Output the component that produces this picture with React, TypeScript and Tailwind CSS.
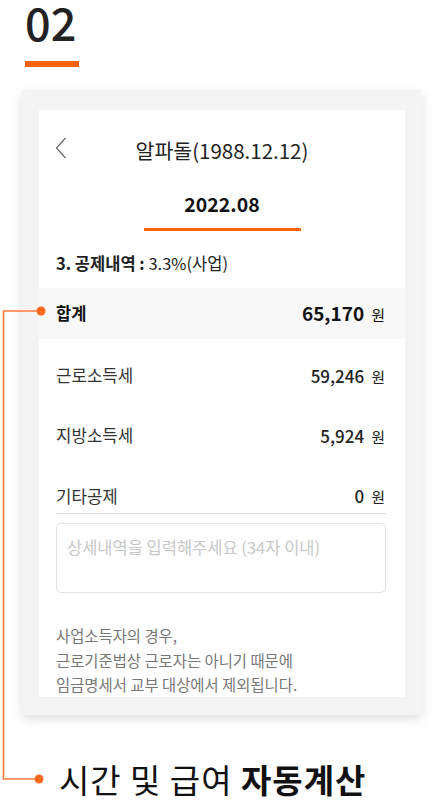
import React from 'react';

const FONT = "font-['Noto_Sans_CJK_KR','Noto_Sans',sans-serif]";

const Row: React.FC<{ label: string; value: string; className?: string }> = ({ label, value, className }) => (
  <div className={`flex items-center justify-between pl-[17px] pr-[20px] ${className ?? ''}`}>
    <span className="text-[16.8px] text-[#333]">{label}</span>
    <span className="flex items-baseline gap-[7px] text-[#222]">
      <span className="text-[17px] font-medium">{value}</span>
      <span className="text-[15px]">원</span>
    </span>
  </div>
);

const Connector: React.FC = () => (
  <svg className="absolute left-0 top-0 pointer-events-none" width="60" height="804" viewBox="0 0 60 804">
    <path d="M40 311 H3.5 V779 H38" fill="none" stroke="#ff7a3a" strokeWidth="1.6" />
    <circle cx="41" cy="311" r="4.5" fill="#ff6a1f" />
    <circle cx="39" cy="779" r="4.5" fill="#ff6a1f" />
  </svg>
);

export default function App() {
  return (
    <div className={`relative w-[442px] h-[804px] overflow-hidden bg-white ${FONT}`}>
      <div className="pl-[25px]">
        <div className="text-[45px] font-medium leading-[44px] text-[#222]">02</div>
        <div className="mt-[17px] w-[54px] h-[6px] bg-[#ff6200]" />
      </div>

      <div className="mt-[23px] ml-[22px] w-[400px] bg-[#f4f4f4] pt-[20px] pb-[18px] px-[17px] shadow-[0_4px_10px_rgba(0,0,0,0.12)]">
        <div className="bg-white w-[366px]">
          <div className="relative flex h-[80px] items-center justify-center">
            <svg className="absolute left-[16px] top-[27px]" width="12" height="22" viewBox="0 0 12 22">
              <path d="M10.5 1 L1.5 11 L10.5 21" fill="none" stroke="#666" strokeWidth="1.2" />
            </svg>
            <span className="text-[20.5px] text-[#222]">알파돌(1988.12.12)</span>
          </div>
          <div className="flex flex-col items-center">
            <span className="text-[19.5px] font-bold leading-[28px] text-[#111]">2022.08</span>
            <div className="mt-[10px] w-[157px] h-[3px] bg-[#ff6200]" />
          </div>
          <div className="pl-[17px] pt-[21px] pb-[14px] text-[16.5px] leading-[22px] text-[#222]">
            <span className="font-bold">3. 공제내역 : </span>
            <span>3.3%(사업)</span>
          </div>
          <div className="flex h-[51px] items-center justify-between bg-[#f8f8f8] pl-[17px] pr-[20px]">
            <span className="text-[16.5px] font-bold text-[#111]">합계</span>
            <span className="flex items-baseline gap-[7px] text-[#111]">
              <span className="text-[19px] font-bold">65,170</span>
              <span className="text-[15px]">원</span>
            </span>
          </div>
          <div className="pt-[7px]">
            <Row label="근로소득세" value="59,246" className="h-[60px]" />
            <Row label="지방소득세" value="5,924" className="h-[60px]" />
            <div className="px-[17px] pr-[19px]">
              <div className="flex h-[48px] items-start justify-between border-b border-[#dcdcdc] pt-[18px]">
                <span className="text-[16.8px] leading-[24px] text-[#333]">기타공제</span>
                <span className="flex items-baseline gap-[7px] pr-[1px] text-[#222] leading-[24px]">
                  <span className="text-[17px] font-medium">0</span>
                  <span className="text-[15px]">원</span>
                </span>
              </div>
              <textarea
                placeholder="상세내역을 입력해주세요 (34자 이내)"
                className="mt-[9px] block h-[70px] w-full resize-none rounded-[5px] border border-[#e2e2e2] px-[10px] pt-[11px] text-[16.5px] text-[#333] outline-none placeholder:text-[#c8c8c8]"
              />
              <p className="pt-[30px] text-[15.4px] leading-[24.5px] text-[#777]">
                사업소득자의 경우,
                <br />
                근로기준법상 근로자는 아니기 때문에
                <br />
                임금명세서 교부 대상에서 제외됩니다.
              </p>
            </div>
          </div>
        </div>
      </div>

      <div className="mt-[42px] pl-[59px] text-[33px] leading-[44px] tracking-[1px] text-[#111]">
        시간 및 급여 <span className="font-bold">자동계산</span>
      </div>

      <Connector />
    </div>
  );
}
